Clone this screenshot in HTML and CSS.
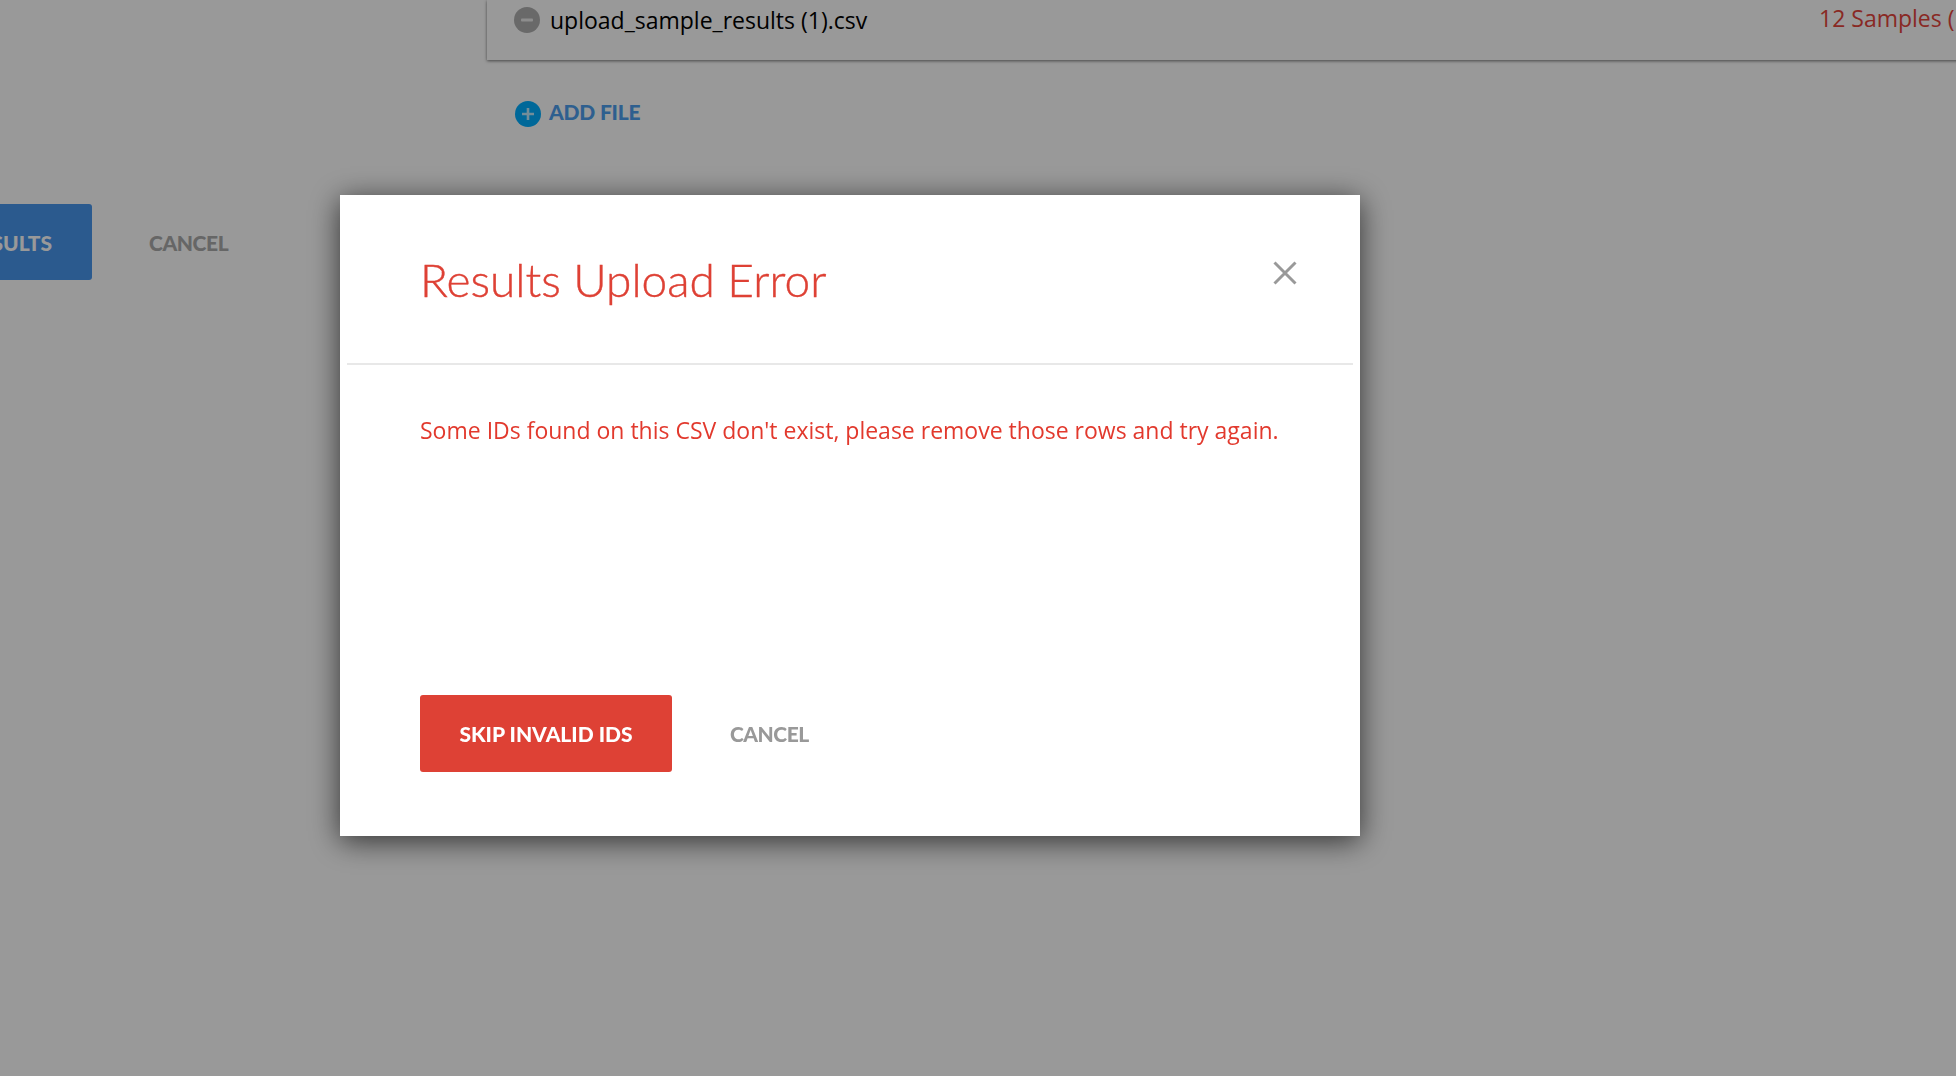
FILE: index.html
```html
<!DOCTYPE html>
<html lang="en">
<head>
<meta charset="utf-8">
<title>Results Upload Error</title>
<link rel="stylesheet" href="styles.css">
</head>
<body>
<main class="page">
  <section class="files">
    <div class="file-card">
      <svg class="icon" viewBox="0 0 26 26"><circle cx="13" cy="13" r="13" fill="#b0b0b0"/><rect x="7" y="11.5" width="12" height="3" rx="1" fill="#fff" fill-opacity=".75"/></svg>
      <span class="file-name">upload_sample_results (1).csv</span>
      <span class="file-count">12 Samples (12 Valid)</span>
    </div>
    <div class="add-file">
      <svg class="icon" viewBox="0 0 26 26"><circle cx="13" cy="13" r="13" fill="#00aeff"/><path d="M13 7v12M7 13h12" stroke="#fff" stroke-opacity=".75" stroke-width="2.6"/></svg>
      <span class="add-label">ADD FILE</span>
    </div>
  </section>
  <div class="page-actions">
    <div class="btn-upload"><span>UPLOAD RESULTS</span></div>
    <span class="link-cancel">CANCEL</span>
  </div>
</main>
<div class="overlay"></div>
<div class="modal">
  <header class="modal-head">
    <h1 class="modal-title">Results Upload Error</h1>
    <svg class="close" viewBox="0 0 24 24"><path d="M1.5 1.5l21 21M22.5 1.5l-21 21" stroke="#999" stroke-width="3" fill="none"/></svg>
  </header>
  <p class="modal-msg">Some IDs found on this CSV don't exist, please remove those rows and try again.</p>
  <div class="modal-actions">
    <div class="btn-skip">SKIP INVALID IDS</div>
    <span class="modal-cancel">CANCEL</span>
  </div>
</div>
</body>
</html>
```

FILE: styles.css
```css
* { box-sizing: border-box; }
html, body { margin: 0; height: 100%; overflow: hidden; background: #fff; }
body { font-family: "Open Sans", "Noto Sans", sans-serif; }

.page { height: 1076px; overflow: hidden; }
.files { margin-left: 487px; width: 1600px; }
.file-card {
  height: 60px;
  padding: 7px 0 0 27px;
  display: flex;
  align-items: flex-start;
  background: #fff;
  box-shadow: 0 1px 3px rgba(0,0,0,.55);
  position: relative;
}
.icon { width: 26px; height: 26px; flex: none; }
.file-name { margin-left: 10px; font-size: 23px; line-height: 26px; color: #000; white-space: nowrap; }
.file-count { position: absolute; left: 1332px; top: 3px; font-size: 23px; line-height: 30px; color: #e5453c; white-space: nowrap; }
.add-file {
  margin: 41px 0 0 28px;
  display: flex;
  align-items: center;
  gap: 8px;
  height: 26px;
  font-family: "Lato", sans-serif;
  font-weight: 900;
  font-size: 21px;
  letter-spacing: -.2px;
  color: #4e9fee;
}
.add-label { margin-top: -5px; }
.page-actions { margin-top: 77px; display: flex; align-items: center; height: 76px; }
.btn-upload {
  width: 92px; height: 76px;
  display: flex; align-items: center; justify-content: flex-end;
  padding-right: 40px;
  overflow: hidden;
  border-radius: 0 3px 3px 0;
  background: #4896ed;
  color: #fff;
  font-family: "Lato", sans-serif; font-weight: 900; font-size: 21px;
  white-space: nowrap;
}
.link-cancel { margin-left: 57px; font-family: "Lato", sans-serif; font-weight: 900; font-size: 21px; letter-spacing: -.4px; color: #aaa; }

.overlay { position: fixed; inset: 0; background: rgba(0,0,0,.4); }
.modal {
  position: fixed;
  left: 340px; top: 195px;
  width: 1020px; height: 641px;
  background: #fff;
  box-shadow: 0 5px 28px rgba(0,0,0,.68);
}
.modal-head {
  margin: 0 7px;
  height: 170px;
  border-bottom: 2px solid #e8e8e8;
  position: relative;
  padding: 57px 0 0 73px;
}
.modal-title { margin: 0; font-family: "Lato", sans-serif; font-weight: 300; font-size: 46px; line-height: 56px; -webkit-text-stroke: .4px #de4135; color: #de4135; }
.close { position: absolute; right: 56px; top: 66px; width: 24px; height: 24px; }
.modal-msg { margin: 0; padding: 49px 0 0 80px; font-size: 23px; line-height: 32px; color: #e2392d; white-space: nowrap; }
.modal-actions { margin: 0; padding: 0 0 0 80px; position: absolute; top: 500px; display: flex; align-items: center; gap: 58px; }
.btn-skip {
  width: 252px; height: 77px;
  display: flex; align-items: center; justify-content: center;
  border-radius: 3px;
  background: #de4135;
  color: #fff;
  font-family: "Lato", sans-serif; font-weight: 900; font-size: 21px;
}
.modal-cancel { font-family: "Lato", sans-serif; font-weight: 900; font-size: 21px; letter-spacing: -.5px; color: #999; }
```
